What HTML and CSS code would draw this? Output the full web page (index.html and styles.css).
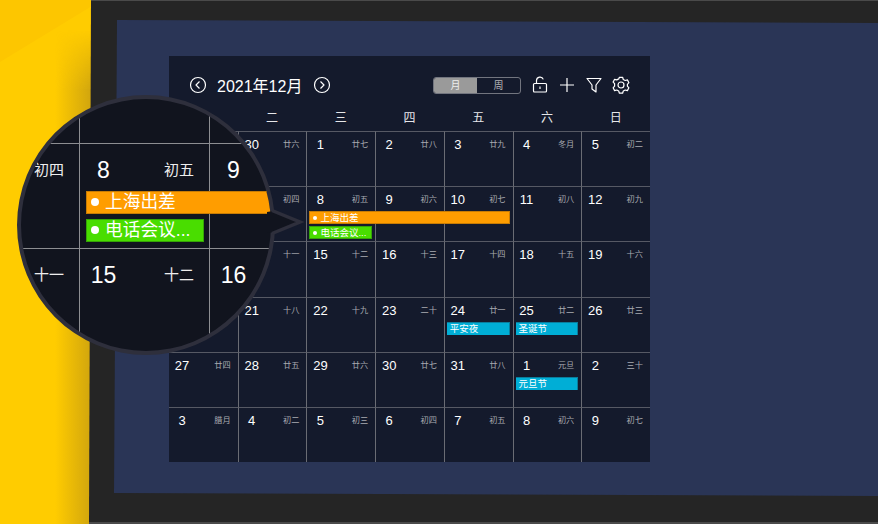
FILE: index.html
```html
<!DOCTYPE html>
<html lang="zh">
<head>
<meta charset="utf-8">
<title>日历</title>
<link rel="stylesheet" href="styles.css">
</head>
<body>
<div class="device">
  <div class="screen">
    <div class="calendar">
      <div class="toolbar">
        <svg class="ico" viewBox="0 0 18 18"><circle cx="9" cy="9" r="7.5"/><path d="M10.5 5.5 7 9l3.5 3.5"/></svg>
        <span class="month">2021年12月</span>
        <svg class="ico" viewBox="0 0 18 18"><circle cx="9" cy="9" r="7.5"/><path d="M7.5 5.5 11 9l-3.5 3.5"/></svg>
        <div class="segment"><span class="seg active">月</span><span class="seg">周</span></div>
        <div class="tools">
          <svg class="ico" viewBox="0 0 18 18"><rect x="2.5" y="7.500" width="13" height="8.500" rx="1"/><path d="M5.500 7.500V4.500a3.500 3.500 0 0 1 6.800-1.100"/><path d="M9 10.500v2.500"/></svg>
          <svg class="ico" viewBox="0 0 18 18"><path d="M9 2v14M2 9h14"/></svg>
          <svg class="ico" viewBox="0 0 18 18"><path d="M2 2.500h14l-5 6.500v7l-4-3V9z"/></svg>
          <svg class="ico" viewBox="0 0 18 18"><path d="M7.400 1.300h3.200l.7 2.200 1.900 1 2.200-.6 1.500 2.800-1.500 1.600v1.900l1.500 1.600-1.500 2.800-2.200-.6-1.900 1-.7 2.200H7.400l-.7-2.200-1.900-1-2.200.6-1.500-2.800 1.500-1.600V7.700L1.100 6.100l1.500-2.800 2.200.6 1.900-1z"/><circle cx="9" cy="9" r="3"/></svg>
        </div>
      </div>
      <div class="weekdays"><span>一</span><span>二</span><span>三</span><span>四</span><span>五</span><span>六</span><span>日</span></div>
      <div class="month-body">
        <div class="grid">
          <div class="cell"><b>29</b><i>廿五</i></div>
          <div class="cell"><b>30</b><i>廿六</i></div>
          <div class="cell"><b>1</b><i>廿七</i></div>
          <div class="cell"><b>2</b><i>廿八</i></div>
          <div class="cell"><b>3</b><i>廿九</i></div>
          <div class="cell"><b>4</b><i>冬月</i></div>
          <div class="cell"><b>5</b><i>初二</i></div>

          <div class="cell"><b>6</b><i>初三</i></div>
          <div class="cell"><b>7</b><i>初四</i></div>
          <div class="cell"><b>8</b><i>初五</i></div>
          <div class="cell"><b>9</b><i>初六</i></div>
          <div class="cell"><b>10</b><i>初七</i></div>
          <div class="cell"><b>11</b><i>初八</i></div>
          <div class="cell"><b>12</b><i>初九</i></div>

          <div class="cell"><b>13</b><i>初十</i></div>
          <div class="cell"><b>14</b><i>十一</i></div>
          <div class="cell"><b>15</b><i>十二</i></div>
          <div class="cell"><b>16</b><i>十三</i></div>
          <div class="cell"><b>17</b><i>十四</i></div>
          <div class="cell"><b>18</b><i>十五</i></div>
          <div class="cell"><b>19</b><i>十六</i></div>

          <div class="cell"><b>20</b><i>十七</i></div>
          <div class="cell"><b>21</b><i>十八</i></div>
          <div class="cell"><b>22</b><i>十九</i></div>
          <div class="cell"><b>23</b><i>二十</i></div>
          <div class="cell"><b>24</b><i>廿一</i></div>
          <div class="cell"><b>25</b><i>廿二</i></div>
          <div class="cell"><b>26</b><i>廿三</i></div>

          <div class="cell"><b>27</b><i>廿四</i></div>
          <div class="cell"><b>28</b><i>廿五</i></div>
          <div class="cell"><b>29</b><i>廿六</i></div>
          <div class="cell"><b>30</b><i>廿七</i></div>
          <div class="cell"><b>31</b><i>廿八</i></div>
          <div class="cell"><b>1</b><i>元旦</i></div>
          <div class="cell"><b>2</b><i>三十</i></div>

          <div class="cell"><b>3</b><i>腊月</i></div>
          <div class="cell"><b>4</b><i>初二</i></div>
          <div class="cell"><b>5</b><i>初三</i></div>
          <div class="cell"><b>6</b><i>初四</i></div>
          <div class="cell"><b>7</b><i>初五</i></div>
          <div class="cell"><b>8</b><i>初六</i></div>
          <div class="cell"><b>9</b><i>初七</i></div>
        </div>
        <div class="events">
          <div class="event orange ev-trip"><em></em>上海出差</div>
          <div class="event green ev-call"><em></em>电话会议...</div>
          <div class="event blue ev-eve">平安夜</div>
          <div class="event blue ev-xmas">圣诞节</div>
          <div class="event blue ev-newyear">元旦节</div>
        </div>
      </div>
    </div>
  </div>
</div>

<div class="lens">
  <div class="lens-inner">
    <div class="lens-body">
      <div class="lens-grid">
        <div class="lens-cell"></div>
        <div class="lens-cell"></div>
        <div class="lens-cell"></div>

        <div class="lens-cell"><i>初四</i></div>
        <div class="lens-cell"><b>8</b><i>初五</i></div>
        <div class="lens-cell"><b>9</b></div>

        <div class="lens-cell"><i>十一</i></div>
        <div class="lens-cell"><b>15</b><i>十二</i></div>
        <div class="lens-cell"><b>16</b></div>
      </div>
      <div class="lens-events">
        <div class="lens-event orange lens-trip"><em></em>上海出差</div>
        <div class="lens-event green lens-call"><em></em>电话会议...</div>
      </div>
    </div>
  </div>
  <svg class="lens-tail" viewBox="0 0 34 30">
    <path class="tail-fill" d="M-5 2 1 1 28 12 1 23-5 22z"/>
    <path class="tail-edge" d="M0 .5 28 12 0 23.500"/>
  </svg>
</div>
</body>
</html>
```

FILE: styles.css
```css
* {
  box-sizing: border-box;
}
body {
  margin: 0;
  width: 878px;
  height: 524px;
  overflow: hidden;
  position: relative;
  background: #ffcc00;
  font-family: "Liberation Sans", "Noto Sans CJK SC", sans-serif;
  color: #fff;
}
/* darker wedge top left and the shadow the device throws */
body::before {
  content: "";
  position: absolute;
  left: 0;
  top: 0;
  width: 92px;
  height: 62px;
  background: #fdc600;
  clip-path: polygon(0 0, 100% 0, 100% 6px, 0 100%);
}
body::after {
  content: "";
  position: absolute;
  left: 55px;
  top: 0;
  width: 36px;
  height: 524px;
  background: linear-gradient(90deg, rgba(190, 150, 20, 0), rgba(190, 150, 20, .7));
  -webkit-mask-image: linear-gradient(180deg, transparent 30px, #000 90px);
}

.device {
  position: relative;
  z-index: 1;
  margin-left: 89px;
  height: 524px;
  padding: 20px 0 28px 25px;
  background: #252525;
  border-top: 1px solid #4a4a4a;
  border-bottom: 2px solid #4a4a4a;
  clip-path: polygon(2px 0, 100% 0, 100% 100%, 0 100%);
}
.screen {
  height: 476px;
  margin-top: -1px;
  padding: 36px 0 0 55px;
  background: #2a3556;
  clip-path: polygon(3px 0, 100% 3px, 100% 100%, 0 calc(100% - 3px));
}

.calendar {
  width: 481px;
  height: 406px;
  background: #141a2c;
}
.toolbar {
  height: 51px;
  padding: 7px 20px 0 20px;
  display: flex;
  align-items: center;
}
.ico {
  width: 18px;
  height: 18px;
  fill: none;
  stroke: #fff;
  stroke-width: 1.2;
  stroke-linejoin: round;
  flex: none;
}
.month {
  margin: 0 11px 0 10px;
  font-size: 16px;
  width: 85px;
  white-space: nowrap;
}
.segment {
  margin-left: 102px;
  width: 88px;
  height: 17px;
  display: flex;
  border: 1px solid #72757f;
  border-radius: 3px;
  overflow: hidden;
}
.seg {
  flex: 1;
  font-size: 10px;
  line-height: 15px;
  text-align: center;
  color: #b5b6ba;
}
.seg.active {
  background: #9a9a9a;
  color: #eee;
}
.tools {
  margin-left: 10px;
  display: flex;
  gap: 9px;
}
.weekdays {
  height: 24px;
  display: grid;
  grid-template-columns: repeat(7, 1fr);
  font-size: 12px;
  line-height: 22px;
  text-align: center;
  color: #e6e7ea;
}

.month-body {
  position: relative;
  height: 331px;
}
.grid,
.events {
  height: 100%;
  display: grid;
  grid-template-columns: repeat(7, 1fr);
  grid-template-rows: repeat(6, 1fr);
}
.events {
  position: absolute;
  inset: 0;
}
.cell {
  display: flex;
  justify-content: space-between;
  align-items: flex-start;
  padding: 5px 7px 0 0;
  border-top: 1px solid #565964;
  border-left: 1px solid #6a6c74;
}
.cell:nth-child(7n+1) {
  border-left: 0;
}
.cell b {
  width: 26px;
  font-weight: normal;
  font-size: 13px;
  line-height: 16px;
  text-align: center;
}
.cell i {
  font-style: normal;
  font-size: 8.2px;
  line-height: 16px;
  color: #a9abb1;
}

.event {
  align-self: start;
  height: 13px;
  margin-top: 25px;
  padding-left: 3px;
  font-size: 9.5px;
  line-height: 12px;
  white-space: nowrap;
  overflow: hidden;
}
.event em {
  display: inline-block;
  width: 4px;
  height: 4px;
  margin-right: 3px;
  border-radius: 50%;
  background: #fff;
  vertical-align: 1px;
}
.orange {
  background: #ff9d00;
  border: 1px solid #c77c05;
}
.green {
  background: #49dd00;
  border: 1px solid #35a506;
}
.blue {
  background: #00aed6;
  border-top: 1px solid #0a7d9c;
  border-right: 1px solid #0a7d9c;
}
.ev-trip {
  grid-column: 3 / span 3;
  grid-row: 2;
  margin-left: 3px;
  margin-right: 3px;
}
.ev-call {
  grid-column: 3;
  grid-row: 2;
  margin-top: 40px;
  margin-left: 3px;
  margin-right: 3px;
}
.ev-eve {
  grid-column: 5;
  grid-row: 4;
  margin-left: 3px;
  margin-right: 3px;
}
.ev-xmas {
  grid-column: 6;
  grid-row: 4;
  margin-left: 3px;
  margin-right: 3px;
}
.ev-newyear {
  grid-column: 6;
  grid-row: 5;
  margin-left: 3px;
  margin-right: 3px;
}

/* magnifier bubble */
.lens {
  position: absolute;
  z-index: 2;
  left: 17px;
  top: 95px;
  width: 258px;
  height: 260px;
}
.lens-inner {
  width: 100%;
  height: 100%;
  border: 4px solid #2e2f3c;
  border-radius: 50%;
  background: #11141e;
  overflow: hidden;
}
.lens-body {
  position: relative;
  margin: -61px 0 0 -72px;
  width: 390px;
  height: 315px;
}
.lens-grid,
.lens-events {
  display: grid;
  grid-template-columns: repeat(3, 130px);
  grid-template-rows: repeat(3, 105px);
}
.lens-events {
  position: absolute;
  inset: 0;
}
.lens-cell {
  display: flex;
  justify-content: space-between;
  align-items: flex-start;
  padding: 12px 15px 0 0;
  border-top: 1px solid #8d8e92;
  border-left: 1px solid #8d8e92;
}
.lens-cell:nth-child(3n+1) {
  justify-content: flex-end;
}
.lens-cell b {
  width: 47px;
  font-weight: normal;
  font-size: 23px;
  line-height: 28px;
  text-align: center;
}
.lens-cell i {
  font-style: normal;
  font-size: 15px;
  line-height: 28px;
  color: #eee;
}
.lens-event {
  align-self: start;
  height: 23px;
  margin-left: 7px;
  padding-left: 4px;
  font-size: 17.7px;
  line-height: 21px;
  white-space: nowrap;
  overflow: hidden;
}
.lens-event em {
  display: inline-block;
  width: 8px;
  height: 8px;
  margin-right: 6px;
  border-radius: 50%;
  background: #fff;
  vertical-align: 2px;
}
.lens-trip {
  grid-column: 2 / span 2;
  grid-row: 1 / span 2;
  margin-top: 153px;
}
.lens-call {
  grid-column: 2;
  grid-row: 1 / span 2;
  margin-top: 181px;
  margin-right: 5px;
}
.lens-tail {
  position: absolute;
  left: 255px;
  top: 115px;
  width: 34px;
  height: 30px;
  overflow: visible;
}
.tail-fill {
  fill: #11141e;
}
.tail-edge {
  fill: none;
  stroke: #2e2f3c;
  stroke-width: 3.5;
}
```
